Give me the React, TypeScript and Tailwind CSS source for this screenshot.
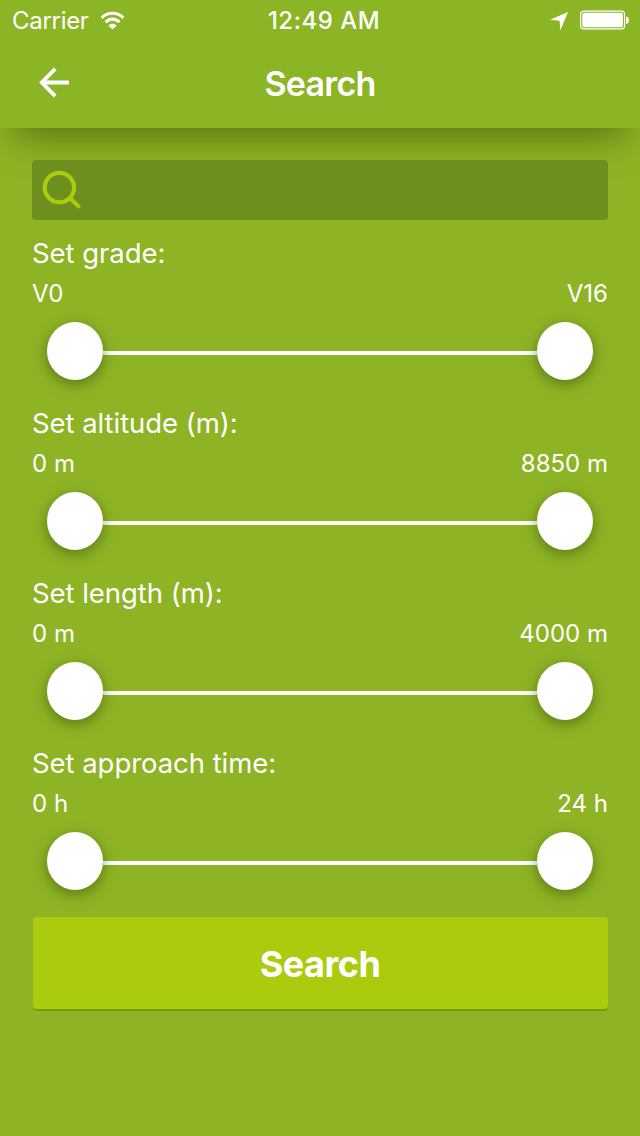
import React, { useState } from 'react';

interface RangeFieldProps {
  label: string;
  unit: string;
  prefix?: string;
  max: number;
}

const thumbClass =
  'relative h-[57.5px] w-14 shrink-0 rounded-[50%] bg-white shadow-[0_4px_14px_rgba(40,60,0,0.5)]';

const RangeField: React.FC<RangeFieldProps> = ({ label, unit, prefix = '', max }) => {
  const [range] = useState<[number, number]>([0, max]);
  const format = (value: number) => `${prefix}${value}${unit}`;

  return (
    <div className="h-[170px] pt-4">
      <p className="text-[27.5px] leading-[34px] tracking-[-0.05px]">{label}</p>
      <div className="mt-[9px] flex justify-between text-[24px] leading-[30px]">
        <span>{format(range[0])}</span>
        <span>{format(range[1])}</span>
      </div>
      <div className="mx-[15px] mt-[13px] flex items-center">
        <button type="button" aria-label={`${label} minimum`} className={thumbClass} />
        <div className="mt-[5px] h-1 flex-1 bg-white" />
        <button type="button" aria-label={`${label} maximum`} className={thumbClass} />
      </div>
    </div>
  );
};

const StatusBar: React.FC = () => (
  <div className="grid h-10 grid-cols-[1fr_auto_1fr] items-center pt-px pr-[11px] pl-3 text-[24px] leading-[30px]">
    <div className="flex items-center">
      <span className="tracking-[-0.3px]">Carrier</span>
      <svg className="mb-px ml-[11px]" width="25" height="19" viewBox="0 0 26 20" fill="none">
        <path d="M1.6 7.2C8 0.9 18 0.9 24.4 7.2" stroke="white" strokeWidth="3.2" />
        <path d="M5.6 11.7C10 7.5 16 7.5 20.4 11.7" stroke="white" strokeWidth="3.2" />
        <path d="M13 19.6L8.6 15.3C11.2 12.9 14.8 12.9 17.4 15.3Z" fill="white" />
      </svg>
    </div>
    <div className="pl-[7px] text-center font-medium whitespace-nowrap tracking-[0.5px]">12:49 AM</div>
    <div className="flex items-center justify-end">
      <svg className="mt-px" width="18" height="19" viewBox="0 0 18 19">
        <path d="M18 0L10.3 18.5L9.6 8.8L0 7.7Z" fill="white" />
      </svg>
      <svg className="mb-px ml-3" width="49" height="20" viewBox="0 0 49 20">
        <rect x="0.6" y="1.1" width="44" height="17.8" rx="3" fill="none" stroke="white" strokeWidth="1.1" />
        <rect x="2.3" y="2.8" width="40.6" height="14.4" rx="1.5" fill="white" />
        <path d="M46 6.5C50 7 50 13.5 46 14Z" fill="white" />
      </svg>
    </div>
  </div>
);

const App: React.FC = () => {
  const [query, setQuery] = useState('');

  return (
    <div className="min-h-[1136px] w-full overflow-hidden bg-[#8eb425] font-['Inter','Liberation_Sans',sans-serif] text-white">
      <header className="relative h-32 bg-[#8bb524] shadow-[0_20px_38px_-14px_rgba(50,75,0,0.68)]">
        <StatusBar />
        <div className="grid h-[88px] grid-cols-3 items-center px-[38px]">
          <button type="button" aria-label="Back" className="mb-[3px]">
            <svg width="32" height="32" viewBox="0 0 32 32" fill="none" stroke="white" strokeWidth="3.8">
              <path d="M17.2 1.9L3.8 15.5L17.2 29.1M3.8 15.5H31" />
            </svg>
          </button>
          <h1 className="text-center text-[34px] leading-10 font-semibold tracking-[-0.7px]">Search</h1>
        </div>
      </header>

      <main className="px-8 pt-8">
        <label className="relative flex h-[60px] items-center rounded bg-[#6d8f1e] pl-[10px]">
          <svg width="40" height="40" viewBox="0 0 40 40" fill="none" stroke="#abcb0e" strokeWidth="4.2">
            <circle cx="17.4" cy="17.6" r="14.7" />
            <path d="M27.5 27.5L37.6 37.4" />
          </svg>
          <input
            value={query}
            onChange={(e) => setQuery(e.target.value)}
            aria-label="Search"
            className="min-w-0 flex-1 bg-transparent px-2 text-[28px] outline-none"
          />
        </label>

        {/* Filters */}
        <RangeField label="Set grade:" prefix="V" unit="" max={16} />
        <RangeField label="Set altitude (m):" unit=" m" max={8850} />
        <RangeField label="Set length (m):" unit=" m" max={4000} />
        <RangeField label="Set approach time:" unit=" h" max={24} />

        <button
          type="button"
          className="relative mt-[17px] ml-px block h-[92px] w-[575px] rounded bg-[#abcb0e] pt-0.5 pr-px text-[36px] font-bold tracking-[-0.5px] shadow-[0_2px_0_#779a16]"
        >
          Search
        </button>
      </main>
    </div>
  );
};

export default App;
